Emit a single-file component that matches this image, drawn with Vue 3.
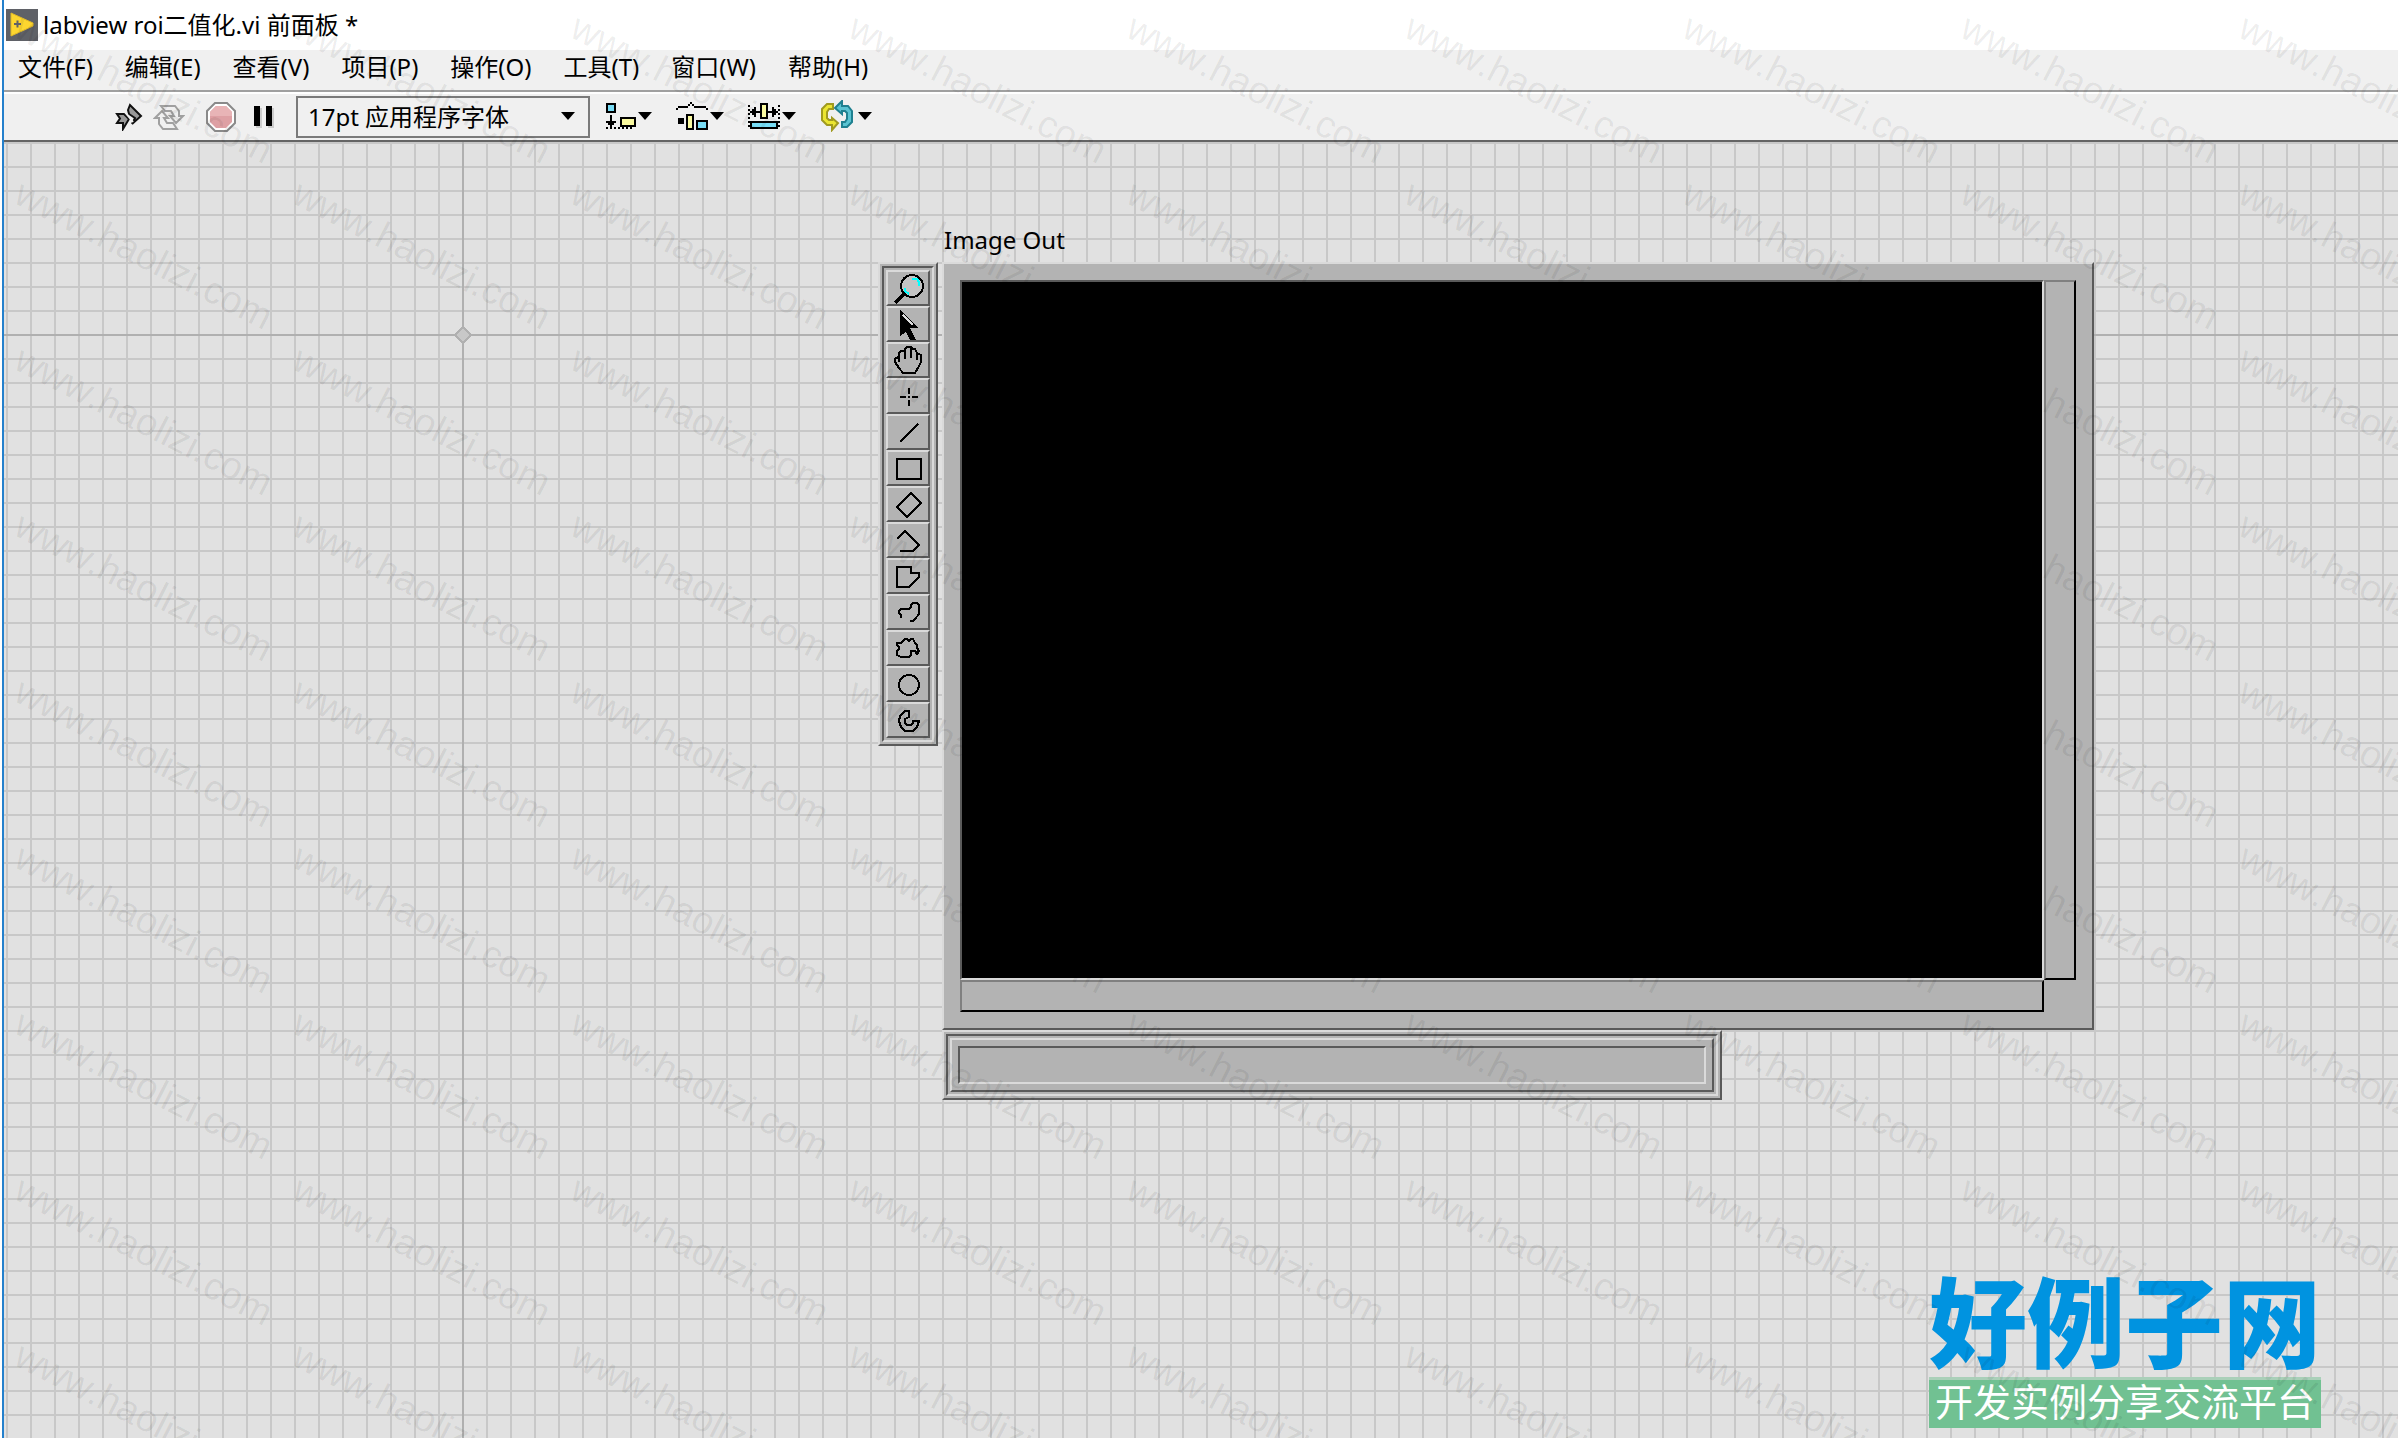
<script setup>
import { ref } from 'vue'

const menus = ['文件(F)', '编辑(E)', '查看(V)', '项目(P)', '操作(O)', '工具(T)', '窗口(W)', '帮助(H)']
const fonts = ['17pt 应用程序字体', '13pt 对话框字体', '15pt 系统字体']
const font = ref(fonts[0])

const tools = [
  { name: '缩放', kind: 'zoom' },
  { name: '选择', kind: 'arrow' },
  { name: '平移', kind: 'hand' },
  { name: '点', d: 'M6 8.5H9M12 8.5H15M10.5 4V7M10.5 10V13M10 8.5H11' },
  { name: '直线', d: 'M6 13L15 4' },
  { name: '矩形', d: 'M4.5 3.5H16.5V13.5H4.5Z' },
  { name: '旋转矩形', d: 'M11.5 2.5L16.5 7.5L9.5 14.5L4.5 9.5Z' },
  { name: '折线', d: 'M4.5 7.5L8.5 3.5L15.5 10.5L12.5 13.5H6' },
  { name: '多边形', d: 'M4.5 3.5H11.5V6.5H15.5V8.5L10.5 13.5H4.5Z' },
  { name: '徒手线', d: 'M6.5 11V9.5L5.5 8.5V7.5L6.5 6.5H10.5L11.5 5.5V4.5L12.5 3.5H14.5L15.5 4.5V9L13.5 11.5L12.5 12.5H11' },
  { name: '徒手区域', d: 'M4.5 6.5V5.5H6.5L8.5 3.5H9.5L10.5 4.5L11.5 3.5H12.5L13.5 5.5L14.5 6.5V8L15.5 9.5L14.5 11L13.5 9.5H11.5V11.5L10.5 12.5H6.5L4.5 11.5V9.5L5.5 8.5V7.5Z' },
  { name: '椭圆', d: 'M10.5 3.5A5 5 0 1 1 10.5 13.5A5 5 0 1 1 10.5 3.5Z' },
  { name: '圆环', d: 'M10.5 3.5H8.5L6 6L5.5 8.5L6.5 11.5L8.5 13.5H12.5L14.5 11.5L15.5 8.5H12.5V9.5L11.5 10.5H9.5L8.5 9.5V7.5L10.5 6.5Z' },
]
</script>

<template>
  <div class="window">
    <header class="title">
      <svg class="logo" viewBox="0 0 32 32" aria-hidden="true">
        <rect width="32" height="32" fill="#5f6167" />
        <path d="M5 4L27 14V17L5 27Z" fill="#fdd62f" stroke="#e0b828" />
        <path d="M8 15H15M11.500 11.500V18.500" stroke="#5f6167" stroke-width="2" />
      </svg>
      <span>labview roi二值化.vi 前面板 *</span>
    </header>

    <nav class="menu">
      <button v-for="m in menus" :key="m" type="button">{{ m }}</button>
    </nav>

    <div class="toolbar">
      <div class="run">
        <button type="button" aria-label="运行">
          <svg width="28" height="28" viewBox="0 0 28 28">
            <path d="M2 11H9L14 16L8 26V20H2L5 15.500Z" fill="#999" stroke="#111" stroke-width="2" />
            <path d="M13 7L15 2L26 13L17 21L20 15L14 11Z" fill="#999" stroke="#111" stroke-width="2" />
            <path d="M10 9L18 19" stroke="#f0f0f0" stroke-width="2" />
          </svg>
        </button>
        <button type="button" aria-label="连续运行">
          <svg width="32" height="28" viewBox="0 0 32 28" fill="#f0f0f0" stroke="#a0a0a0" stroke-width="2">
            <path d="M8 3H22L26 8V13H30L23 20L17 13H21L18 8H12Z" />
            <path d="M24 26H10L6 21V15H2L9 8L15 15H11L14 20H20Z" />
          </svg>
        </button>
        <button class="abort" type="button" aria-label="中止执行">
          <svg width="30" height="30" viewBox="0 0 30 30">
            <path d="M9 1H21L29 9V21L21 29H9L1 21V9Z" fill="#fff" stroke="#8a8a8a" stroke-width="2" />
            <path d="M10 4H20L26 10V20L20 26H10L4 20V10Z" fill="#dea0a4" />
            <path d="M10 4H20L26 10V14H4V10Z" fill="#e8b4b6" />
          </svg>
        </button>
        <button type="button" aria-label="暂停">
          <svg width="20" height="22" viewBox="0 0 20 22" shape-rendering="crispEdges">
            <path d="M2 2H8V22H2ZM14 2H20V22H14Z" fill="#ccc" />
            <path d="M0 0H6V20H0ZM12 0H18V20H12Z" />
          </svg>
        </button>
      </div>

      <div class="picker">
        <select v-model="font" aria-label="文本设置">
          <option v-for="f in fonts" :key="f">{{ f }}</option>
        </select>
        <svg class="caret" viewBox="0 0 14 8"><path d="M0 0H14L7 8Z" /></svg>
      </div>

      <div class="arrange">
        <button type="button" aria-label="对齐对象">
          <svg width="30" height="26" viewBox="0 0 15 13" shape-rendering="crispEdges" stroke="#000">
            <rect x=".5" y=".5" width="4" height="4" fill="#78dcf5" />
            <path d="M2.500 6V12M0 9.500H5M1 10.500H4" fill="none" />
            <path d="M0 12.500H14" stroke-dasharray="1 1" />
            <rect x="7.500" y="7.500" width="7" height="4" fill="#fafaa0" />
          </svg>
          <svg class="caret" viewBox="0 0 14 8"><path d="M0 0H14L7 8Z" /></svg>
        </button>
        <button type="button" aria-label="分布对象">
          <svg width="32" height="28" viewBox="0 0 16 14" shape-rendering="crispEdges" stroke="#000">
            <path d="M0 3.500H1M1 2.500H6M6 1.500H7M7 .5H8M8 1.500H9M9 2.500H15M15 3.500H16" fill="none" />
            <rect x="1" y="8" width="3" height="3" stroke="none" />
            <rect x="5.500" y="6.500" width="3" height="7" fill="#fafaa0" />
            <rect x="10.500" y="9.500" width="5" height="4" fill="#78dcf5" />
          </svg>
          <svg class="caret" viewBox="0 0 14 8"><path d="M0 0H14L7 8Z" /></svg>
        </button>
        <button type="button" aria-label="调整对象大小">
          <svg width="32" height="26" viewBox="0 0 16 13" shape-rendering="crispEdges" stroke="#000">
            <path d="M.5 1V13M15.500 1V13" stroke-dasharray="1 1" />
            <path d="M1 4.500H6M10 4.500H15M2.500 3V6M3.500 2V7M13.500 3V6M12.500 2V7" />
            <rect x="6.500" y=".5" width="3" height="7" fill="#fafaa0" />
            <rect x="1.500" y="9.500" width="13" height="3" fill="#78dcf5" />
          </svg>
          <svg class="caret" viewBox="0 0 14 8"><path d="M0 0H14L7 8Z" /></svg>
        </button>
        <button type="button" aria-label="重新排序">
          <svg width="36" height="32" viewBox="-1 0 36 32" stroke-width="2">
            <path d="M12 4H6L1 9V20L6 25H11V30L17 23L11 18V20H8L6 18V12L8 9H12Z" fill="#ebe632" stroke="#a09a20" />
            <path d="M21 27H26L31 22V11L27 6H21V1L14 8L21 14V11H24L26 13V19L24 22H21Z" fill="#5ac3d2" stroke="#1f8090" />
          </svg>
          <svg class="caret" viewBox="0 0 14 8"><path d="M0 0H14L7 8Z" /></svg>
        </button>
      </div>
    </div>

    <main class="canvas">
      <svg class="origin" viewBox="0 0 9 9" shape-rendering="crispEdges" aria-hidden="true">
        <path d="M4.500 .5L8.500 4.500L4.500 8.500L.5 4.500Z" fill="#c8c8c8" stroke="#b0b0b0" />
      </svg>

      <div class="control">
        <div class="palette raised">
          <div class="well sunken">
            <button v-for="t in tools" :key="t.name" class="tool raised" type="button" :aria-label="t.name">
              <svg width="40" height="32" viewBox="0 0 20 16" shape-rendering="crispEdges" fill="none" stroke="#000">
                <path v-if="t.d" :d="t.d" />
                <template v-else-if="t.kind === 'zoom'">
                  <circle cx="12" cy="7" r="5.500" fill="#c4c4c4" />
                  <path d="M12 3.500H14.500L15.500 5V7M8.500 8V9.500L10.500 11" stroke="#0ff" />
                  <path d="M3.500 15.500L8 11" stroke-width="2" />
                </template>
                <template v-else-if="t.kind === 'arrow'">
                  <path d="M6 1L15 10H11L14 16H11L9 12L6 14Z" fill="#000" stroke="none" />
                  <path d="M7.500 3.500L12.500 8.500" stroke="#ddd" />
                </template>
                <template v-else>
                  <path d="M5.500 9V4.500L6.500 3.500H8.500V2.500L9.500 1.500H11.500L12.500 2.500H13.500L14.500 4.500L16.500 5.500V9L15.500 11L13.500 14.500H7.500L5.500 12L3.500 9V7.500L5 6.500" />
                  <path d="M8.500 3V7.500M11.500 2V7M14.500 4V8" />
                </template>
              </svg>
            </button>
          </div>
        </div>

        <div class="display">
          <h1>Image Out</h1>
          <section class="frame raised" aria-label="Image Out">
            <div class="screen sunken"></div>
            <div class="track vertical"></div>
            <div class="track"></div>
          </section>
          <div class="info raised">
            <div class="sunken">
              <div class="rim raised">
                <output class="sunken"></output>
              </div>
            </div>
          </div>
        </div>
      </div>
    </main>

    <aside class="brand">
      <strong>好例子网</strong>
      <span>开发实例分享交流平台</span>
    </aside>

    <div class="watermark" aria-hidden="true">
      <div class="tiles">
        <span v-for="n in 81" :key="n">www.haolizi.com</span>
      </div>
    </div>
  </div>
</template>

<style>
body {
  margin: 0;
  background: #fff;
}
</style>

<style scoped>
* {
  box-sizing: border-box;
}

.window {
  position: relative;
  display: flex;
  flex-direction: column;
  min-height: 100vh;
  margin-left: 2px;
  border-left: 2px solid #2480cc;
  font: 24px/32px "Noto Sans", "Noto Sans CJK SC", sans-serif;
  color: #000;
}

button {
  padding: 0;
  border: 0;
  background: none;
  font: inherit;
  color: inherit;
}

svg {
  display: block;
  flex: none;
}

.title {
  display: flex;
  align-items: center;
  gap: 5px;
  height: 50px;
  padding-left: 2px;
  background: #fff;
}

.logo {
  width: 32px;
  height: 32px;
}

.menu {
  display: flex;
  gap: 32px;
  align-items: center;
  height: 42px;
  padding: 0 14px 6px;
  background: #f0f0f0;
  border-bottom: 2px solid #a0a0a0;
}

.toolbar {
  display: flex;
  align-items: center;
  height: 50px;
  padding-left: 111px;
  background: #f0f0f0;
  border-top: 2px solid #fff;
  border-bottom: 2px solid #646464;
}

.run {
  display: flex;
  align-items: center;
  gap: 10px;
}

.run .abort {
  margin: 0 8px 0 11px;
}

.picker {
  position: relative;
  width: 294px;
  margin-left: 22px;
}

.picker select {
  display: block;
  width: 100%;
  height: 42px;
  padding: 0 10px;
  appearance: none;
  border: 2px solid #7a7a7a;
  border-radius: 0;
  background: #f0f0f0;
  font: inherit;
  color: inherit;
}

.picker .caret {
  position: absolute;
  right: 15px;
  top: 16px;
}

.caret {
  width: 14px;
  height: 8px;
}

.arrange {
  display: flex;
  align-items: center;
  gap: 24px;
  margin-left: 16px;
  padding-bottom: 2px;
}

.arrange button {
  display: flex;
  align-items: center;
  gap: 2px;
}

.canvas {
  position: relative;
  flex: 1;
  padding: 82px 0 60px 874px;
  background:
    linear-gradient(#b0b0b0, #b0b0b0) 458px 0 / 2px 100% no-repeat,
    linear-gradient(#b0b0b0, #b0b0b0) 0 192px / 100% 2px no-repeat,
    linear-gradient(90deg, #c8c8c8 2px, transparent 2px) 2px 0 / 24px 24px,
    linear-gradient(#c8c8c8 2px, transparent 2px) 0 0 / 24px 24px,
    #e1e1e1;
}

.origin {
  position: absolute;
  left: 450px;
  top: 184px;
  width: 18px;
  height: 18px;
}

.control {
  display: flex;
  align-items: flex-start;
  gap: 4px;
}

.raised,
.sunken {
  border: 2px solid;
  background: #b3b3b3;
}

.raised {
  border-color: #dadada #5a5a5a #5a5a5a #dadada;
}

.sunken {
  border-color: #5a5a5a #dadada #dadada #5a5a5a;
}

.palette {
  margin-top: 38px;
  padding: 2px;
}

.well {
  display: flex;
  flex-direction: column;
  padding: 2px;
}

.tool {
  display: block;
  border: 2px solid;
  border-color: #dadada #5a5a5a #5a5a5a #dadada;
}

h1 {
  margin: 0 0 0 2px;
  padding-bottom: 6px;
  font-size: 24px;
  line-height: 32px;
  font-weight: 400;
}

.frame {
  display: grid;
  grid-template: 700px 32px / 1084px 32px;
  padding: 16px;
}

.screen {
  background: #000;
}

.track {
  border: 2px solid;
  border-color: #808080 #000 #000 #808080;
}

.info {
  width: 780px;
  padding: 2px;
}

.info > .sunken {
  padding: 2px;
}

.rim {
  padding: 6px;
}

.rim output {
  display: block;
  height: 38px;
}

.brand {
  position: absolute;
  right: 77px;
  bottom: 10px;
  text-align: center;
  white-space: nowrap;
}

.brand strong {
  display: block;
  padding-bottom: 6px;
  font: 900 98px/108px "Noto Sans CJK SC", sans-serif;
  color: #0093e0;
}

.brand span {
  display: block;
  padding: 0 5px 8px;
  border-top: 3px solid #aad0b9;
  background: #71c192;
  font: 38px/40px "Noto Sans CJK SC", sans-serif;
  color: #fff;
}

.watermark {
  position: absolute;
  inset: 0;
  overflow: hidden;
  pointer-events: none;
}

.tiles {
  display: grid;
  grid-template-columns: repeat(9, 278px);
  grid-auto-rows: 166px;
  padding: 3px 0 0 8px;
}

.tiles span {
  height: 40px;
  font: 38px/40px "Liberation Sans", sans-serif;
  font-kerning: none;
  color: rgba(0, 0, 0, 0.07);
  white-space: nowrap;
  transform: rotate(27deg);
  transform-origin: 0 33px;
}
</style>
